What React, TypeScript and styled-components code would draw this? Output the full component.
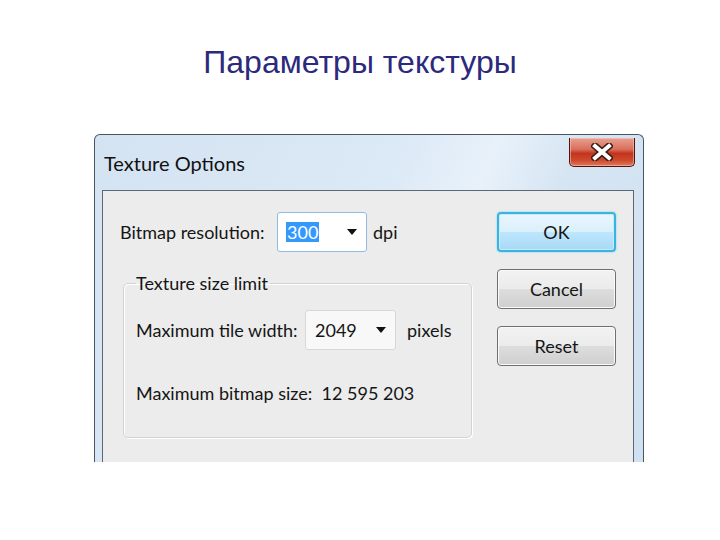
import React from "react";
import styled, { createGlobalStyle } from "styled-components";

const GlobalStyle = createGlobalStyle`
  html, body {
    margin: 0;
    padding: 0;
    background: #ffffff;
  }
  body {
    width: 720px;
    height: 540px;
    overflow: hidden;
  }
`;

const Page = styled.div`
  display: flex;
  flex-direction: column;
  align-items: center;
  width: 720px;
  height: 540px;
`;

const SlideTitle = styled.h1`
  margin: 42px 0 0;
  font-family: "Liberation Sans", Arial, sans-serif;
  font-weight: normal;
  font-size: 32px;
  line-height: 40px;
  color: #2c2a7c;
`;

const Window = styled.div`
  margin-top: 52px;
  margin-left: 18px;
  width: 550px;
  height: 328px;
  box-sizing: border-box;
  display: flex;
  flex-direction: column;
  border: 1px solid #4a5562;
  border-bottom: none;
  border-radius: 6px 6px 0 0;
  background: linear-gradient(
    115deg,
    #d4e3f2 0%,
    #dce9f6 45%,
    #e8f1fa 58%,
    #d6e5f3 70%,
    #cfe0f1 100%
  );
  font-family: "Segoe UI", Lato, "DejaVu Sans", sans-serif;
  color: #151515;
`;

const TitleBar = styled.div`
  display: flex;
  align-items: flex-start;
  height: 55px;
  padding: 0 8px 0 9px;
`;

const TitleText = styled.span`
  margin-top: 16px;
  font-size: 20px;
  color: #111;
`;

const CloseButton = styled.div`
  margin-left: auto;
  margin-top: 3px;
  width: 66px;
  height: 29px;
  display: flex;
  align-items: center;
  justify-content: center;
  box-sizing: border-box;
  border: 1px solid #4a1710;
  border-top: none;
  border-radius: 0 0 5px 5px;
  background: linear-gradient(
    180deg,
    #e8a090 0%,
    #d9705c 40%,
    #c2341c 55%,
    #cf4a2e 80%,
    #e07a5c 100%
  );
  box-shadow: inset 0 0 0 1px rgba(255, 210, 200, 0.5);
`;

const Client = styled.div`
  flex: 1;
  display: flex;
  margin: 0 9px 0 7px;
  padding: 21px 17px 0 17px;
  border: 1px solid #5a6877;
  border-bottom: none;
  background: #ececec;
`;

const LeftColumn = styled.div`
  width: 352px;
  display: flex;
  flex-direction: column;
`;

const Row = styled.div`
  display: flex;
  align-items: center;
`;

const Label = styled.span<{ $width: number }>`
  width: ${(p) => p.$width}px;
  font-size: 18px;
  white-space: nowrap;
`;

const Unit = styled.span<{ $gap: number }>`
  margin-left: ${(p) => p.$gap}px;
  font-size: 18px;
`;

const Combo = styled.div<{ $focused?: boolean }>`
  width: ${(p) => (p.$focused ? 90 : 91)}px;
  height: 40px;
  box-sizing: border-box;
  display: flex;
  align-items: center;
  padding: 0 9px 0 8px;
  border: 1px solid ${(p) => (p.$focused ? "#8fbbe3" : "#d7d7d7")};
  border-radius: 3px;
  background: ${(p) => (p.$focused ? "#ffffff" : "#f8f8f8")};
  font-size: 18px;
`;

const ComboValue = styled.span<{ $selected?: boolean }>`
  padding: 0 1px;
  line-height: 20px;
  background: ${(p) => (p.$selected ? "#3399ff" : "transparent")};
  color: ${(p) => (p.$selected ? "#ffffff" : "#151515")};
`;

const Arrow = styled.span`
  margin-left: auto;
  width: 0;
  height: 0;
  border-left: 5px solid transparent;
  border-right: 5px solid transparent;
  border-top: 6px solid #111;
`;

const Group = styled.fieldset`
  margin: 20px 0 0 3px;
  padding: 0 12px 0 12px;
  height: 166px;
  box-sizing: border-box;
  border: 1px solid #cdd5db;
  border-radius: 5px;
  box-shadow: inset 1px 1px 0 #ffffff, 1px 1px 0 #ffffff;
`;

const Legend = styled.legend`
  padding: 0 2px 0 0;
  margin-left: 0;
  font-size: 18px;
`;

const GroupRow = styled(Row)`
  margin-top: 16px;
`;

const InfoLine = styled.div`
  margin-top: 32px;
  font-size: 18px;
  white-space: nowrap;
`;

const ButtonColumn = styled.div`
  margin-left: auto;
  display: flex;
  flex-direction: column;
  gap: 17px;
`;

const Button = styled.div<{ $default?: boolean }>`
  width: 119px;
  height: 40px;
  box-sizing: border-box;
  display: flex;
  align-items: center;
  justify-content: center;
  font-size: 18px;
  border-radius: 4px;
  border: ${(p) => (p.$default ? "2px solid #3bb3e0" : "1px solid #6f6f6f")};
  background: ${(p) =>
    p.$default
      ? "linear-gradient(180deg, #eaf6fd 0%, #d9f0fc 50%, #bee6fd 51%, #a7d9f5 100%)"
      : "linear-gradient(180deg, #f2f2f2 0%, #ebebeb 50%, #dddddd 51%, #cfcfcf 100%)"};
  box-shadow: ${(p) =>
    p.$default
      ? "inset 0 0 0 1px #c6ecfb, 0 0 2px #5fd0f5"
      : "inset 0 0 0 1px #fafafa"};
`;

const CloseGlyph = () => (
  <svg width="22" height="18" viewBox="0 0 22 18">
    <path
      d="M4 3 L18 15 M18 3 L4 15"
      stroke="#3a1c18"
      strokeWidth="7"
      strokeLinecap="square"
    />
    <path
      d="M4 3 L18 15 M18 3 L4 15"
      stroke="#ffffff"
      strokeWidth="4"
      strokeLinecap="square"
    />
  </svg>
);

export default function App() {
  return (
    <Page>
      <GlobalStyle />
      <SlideTitle>Параметры текстуры</SlideTitle>
      <Window>
        <TitleBar>
          <TitleText>Texture Options</TitleText>
          <CloseButton>
            <CloseGlyph />
          </CloseButton>
        </TitleBar>
        <Client>
          <LeftColumn>
            <Row>
              <Label $width={157}>Bitmap resolution:</Label>
              <Combo $focused>
                <ComboValue $selected>300</ComboValue>
                <Arrow />
              </Combo>
              <Unit $gap={6}>dpi</Unit>
            </Row>
            <Group>
              <Legend>Texture size limit</Legend>
              <GroupRow>
                <Label $width={169}>Maximum tile width:</Label>
                <Combo>
                  <ComboValue>2049</ComboValue>
                  <Arrow />
                </Combo>
                <Unit $gap={11}>pixels</Unit>
              </GroupRow>
              <InfoLine>Maximum bitmap size:&nbsp;&nbsp;12 595 203</InfoLine>
            </Group>
          </LeftColumn>
          <ButtonColumn>
            <Button $default>OK</Button>
            <Button>Cancel</Button>
            <Button>Reset</Button>
          </ButtonColumn>
        </Client>
      </Window>
    </Page>
  );
}
